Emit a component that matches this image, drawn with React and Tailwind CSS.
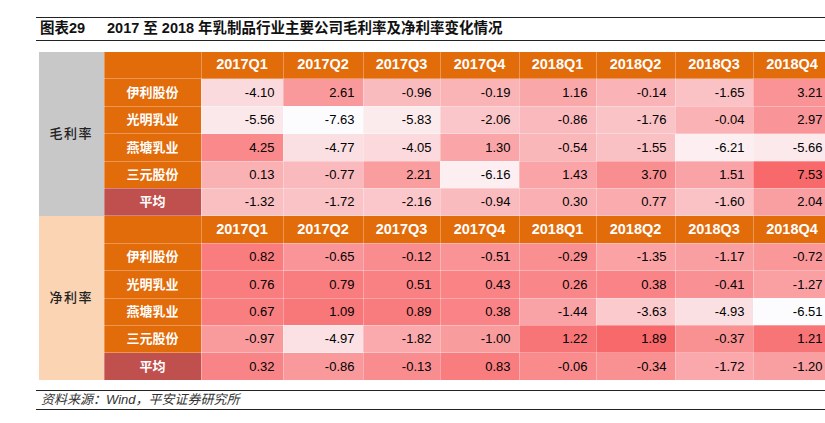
const quarters = ['2017Q1', '2017Q2', '2017Q3', '2017Q4', '2018Q1', '2018Q2', '2018Q3', '2018Q4']
const colWidths = ['w-[82px]', 'w-[80px]', 'w-[77px]', 'w-[79px]', 'w-[77px]', 'w-[79px]', 'w-[78px]', 'w-[78px]']

const blocks = [
  {
    label: '毛利率',
    labelBg: 'bg-[#C8C8C8]',
    rows: [
      ['伊利股份', [-4.1, 2.61, -0.96, -0.19, 1.16, -0.14, -1.65, 3.21]],
      ['光明乳业', [-5.56, -7.63, -5.83, -2.06, -0.86, -1.76, -0.04, 2.97]],
      ['燕塘乳业', [4.25, -4.77, -4.05, 1.3, -0.54, -1.55, -6.21, -5.66]],
      ['三元股份', [0.13, -0.77, 2.21, -6.16, 1.43, 3.7, 1.51, 7.53]],
      ['平均', [-1.32, -1.72, -2.16, -0.94, 0.3, 0.77, -1.6, 2.04]],
    ],
  },
  {
    label: '净利率',
    labelBg: 'bg-[#FBD4B4]',
    rows: [
      ['伊利股份', [0.82, -0.65, -0.12, -0.51, -0.29, -1.35, -1.17, -0.72]],
      ['光明乳业', [0.76, 0.79, 0.51, 0.43, 0.26, 0.38, -0.41, -1.27]],
      ['燕塘乳业', [0.67, 1.09, 0.89, 0.38, -1.44, -3.63, -4.93, -6.51]],
      ['三元股份', [-0.97, -4.97, -1.82, -1.0, 1.22, 1.89, -0.37, 1.21]],
      ['平均', [0.32, -0.86, -0.13, 0.83, -0.06, -0.34, -1.72, -1.2]],
    ],
  },
]

// white -> red two-colour scale, per block
function heat(v, min, max) {
  const t = (v - min) / (max - min)
  const r = Math.round(252 - 4 * t)
  const g = Math.round(252 - 147 * t)
  const b = Math.round(255 - 148 * t)
  return `rgb(${r},${g},${b})`
}

function Block({ block }) {
  const all = block.rows.flatMap(([, vals]) => vals)
  const min = Math.min(...all)
  const max = Math.max(...all)

  return (
    <>
      <tr className="h-[27.4px]">
        <td
          rowSpan={6}
          className={`${block.labelBg} border-0 text-center text-[13px] font-medium tracking-[1.5px] text-[#222]`}
        >
          {block.label}
        </td>
        <td className="border border-white/30 bg-[#E26B0A]" />
        {quarters.map((q) => (
          <td
            key={q}
            className="border border-white/30 bg-[#E26B0A] text-center text-[14.5px] font-bold text-white"
          >
            {q}
          </td>
        ))}
      </tr>
      {block.rows.map(([name, vals]) => (
        <tr key={name} className="h-[27.4px]">
          <td
            className={`border border-white/30 text-center text-[13px] font-bold text-white ${
              name === '平均' ? 'bg-[#C0504D]' : 'bg-[#E26B0A]'
            }`}
          >
            {name}
          </td>
          {vals.map((v, i) => (
            <td
              key={i}
              className="border border-white/30 pr-[8px] text-right text-[13px] text-black"
              style={{ backgroundColor: heat(v, min, max) }}
            >
              {v.toFixed(2)}
            </td>
          ))}
        </tr>
      ))}
    </>
  )
}

export default function App() {
  return (
    <div className="h-[423px] w-[825px] overflow-hidden bg-white font-['Liberation_Sans','Noto_Sans_CJK_SC',sans-serif]">
      <div className="pl-[36px] pt-[17px]">
        <div className="flex h-[24px] items-center border-y-[1.5px] border-[#222] pl-[4px] text-[14.5px] font-bold text-[#111]">
          <span className="w-[67px]">图表29</span>
          <span>2017 至 2018 年乳制品行业主要公司毛利率及净利率变化情况</span>
        </div>

        <table className="ml-[3px] mt-[10px] w-[792px] table-fixed border-collapse">
          <colgroup>
            <col className="w-[65px]" />
            <col className="w-[97px]" />
            {colWidths.map((w, i) => (
              <col key={i} className={w} />
            ))}
          </colgroup>
          <tbody>
            {blocks.map((b) => (
              <Block key={b.label} block={b} />
            ))}
          </tbody>
        </table>

        <div className="mt-[9px] flex h-[20px] items-center border-y-[1.5px] border-[#222] pl-[5px] text-[13px] italic text-[#333]">
          资料来源：Wind，平安证券研究所
        </div>
      </div>
    </div>
  )
}
